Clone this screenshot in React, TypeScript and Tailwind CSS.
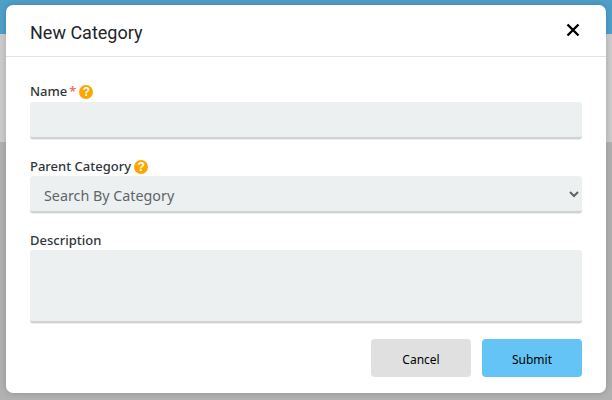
import React from 'react';

const HelpIcon = () => (
  <span className="ml-[3px] flex h-[14px] w-[14px] items-center justify-center rounded-full bg-[#ffa500] text-[12px] font-bold leading-none text-white [font-family:'Liberation_Sans',sans-serif]">
    ?
  </span>
);

const Field = ({ children }: { children: React.ReactNode }) => (
  <div className="flex h-[19px] items-center pt-[1px] text-[13px] font-medium text-[#2f353a] [font-family:'Noto_Sans',sans-serif]">
    {children}
  </div>
);

const inputClass =
  'block w-full rounded-[3px] border-0 border-b-2 border-b-[#d0d2d3] bg-[#ecf0f1] shadow-[0_1px_0_#eceded] outline-none';

const App = () => {
  return (
    <div className="relative h-[400px] w-[612px] overflow-hidden bg-[#b1b1b1]">
      <div className="h-[34px] bg-[#4f9fc9]" />
      <div className="h-[108px] bg-[#cbcbcb]" />

      {/* modal */}
      <div className="absolute left-[6px] top-[5px] flex h-[388px] w-[600px] flex-col rounded-[7px] bg-white shadow-[0_0_6px_rgba(0,0,0,0.18)]">
        <div className="flex h-[52px] items-center justify-between border-b border-[#e3e3e3] pl-6 pr-[26px]">
          <h2 className="pt-[3px] text-[18px] text-[#212529] [font-family:Roboto,sans-serif]">New Category</h2>
          <svg width="14" height="14" viewBox="0 0 14 14" className="mb-[2px]">
            <path d="M1.5 1.5 L12.5 12.5 M12.5 1.5 L1.5 12.5" stroke="#000" strokeWidth="2.4" fill="none" />
          </svg>
        </div>

        <div className="flex flex-col px-6 pt-[25px]">
          <Field>
            Name<span className="ml-[2px] text-[#ff5a5f]">*</span>
            <HelpIcon />
          </Field>
          <input className={`${inputClass} mt-[1px] h-[37px]`} />

          <div className="mt-[18px]">
            <Field>
              Parent Category
              <HelpIcon />
            </Field>
          </div>
          <select className={`${inputClass} h-[37px] pl-[10px] pt-[3px] text-[14.3px] text-[#5f6468] [font-family:'Noto_Sans',sans-serif]`}>
            <option>Search By Category</option>
          </select>

          <div className="mt-[18px]">
            <Field>Description</Field>
          </div>
          <textarea className={`${inputClass} h-[73px] resize-none`} />

          <div className="mt-[16px] flex justify-end gap-[11px]">
            <button className="h-[38px] w-[100px] rounded-[4px] bg-[#e0e0e0] pt-[3px] text-[12px] text-black [font-family:'Noto_Sans',sans-serif]">
              Cancel
            </button>
            <button className="h-[38px] w-[100px] rounded-[4px] bg-[#63c4f5] pt-[3px] text-[12px] text-black [font-family:'Noto_Sans',sans-serif]">
              Submit
            </button>
          </div>
        </div>
      </div>
    </div>
  );
};

export default App;
